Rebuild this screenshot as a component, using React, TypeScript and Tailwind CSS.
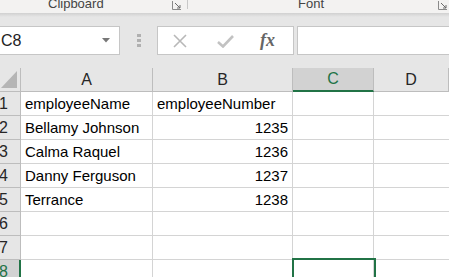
import React from "react";

const rows = [
  ["employeeName", "employeeNumber"],
  ["Bellamy Johnson", "1235"],
  ["Calma Raquel", "1236"],
  ["Danny Ferguson", "1237"],
  ["Terrance", "1238"],
  ["", ""],
  ["", ""],
  ["", ""],
];

function Launcher() {
  return (
    <svg width="10" height="9" viewBox="0 0 10 9" className="shrink-0">
      <path d="M0.5 0 V8.5 H9" stroke="#8a8a8a" fill="none" />
      <path d="M3 2 L8 7 M8 4 V7 H5" stroke="#6a6a6a" fill="none" />
    </svg>
  );
}

function Ribbon() {
  return (
    <div className="h-[13px] bg-[#f3f2f1] flex overflow-hidden text-[13px] leading-[13px] text-[#444] font-['Liberation_Sans',sans-serif]">
      <div className="w-[188px] flex items-start shrink-0 border-r border-[#c8c8c8] h-[9px]">
        <span className="ml-[48px] mt-[-3px]">Clipboard</span>
        <div className="ml-auto mr-[5px] mt-[1px]">
          <Launcher />
        </div>
      </div>
      <div className="flex-1 flex items-start">
        <span className="ml-[110px] mt-[-3px]">Font</span>
        <div className="ml-auto mr-[1px] mt-[1px]">
          <Launcher />
        </div>
      </div>
    </div>
  );
}

function FormulaBar() {
  return (
    <div className="pt-[9px] flex h-[38px]">
      <div className="w-[120px] h-[29px] bg-white border border-l-0 border-[#c6c6c6] flex items-center">
        <span className="text-[16px] text-[#222] font-['Liberation_Sans',sans-serif] ml-[1px]">C8</span>
        <svg width="8" height="5" viewBox="0 0 8 5" className="ml-auto mr-[9px]">
          <path d="M0 0 H8 L4 4.5 Z" fill="#777" />
        </svg>
      </div>
      <div className="w-[37px] flex flex-col items-center justify-center gap-[2px]">
        <div className="w-[4px] h-[3px] bg-[#b0b0b0]" />
        <div className="w-[4px] h-[3px] bg-[#b0b0b0]" />
        <div className="w-[4px] h-[3px] bg-[#b0b0b0]" />
      </div>
      <div className="w-[137px] h-[29px] bg-white border border-[#c6c6c6] flex items-center">
        <svg width="16" height="16" viewBox="0 0 16 16" className="ml-[14px]">
          <path d="M2 2 L14 14 M14 2 L2 14" stroke="#b8b8b8" strokeWidth="1.6" />
        </svg>
        <svg width="17" height="14" viewBox="0 0 17 14" className="ml-[29px]">
          <path d="M1 8 L6 12.5 L16 2" stroke="#c2c2c2" strokeWidth="2.6" fill="none" />
        </svg>
        <span className="ml-[26px] text-[18px] italic font-bold text-[#666] font-['Liberation_Serif',serif]">fx</span>
      </div>
      <div className="ml-[3px] flex-1 h-[29px] bg-white border border-r-0 border-[#c6c6c6]" />
    </div>
  );
}

function Sheet() {
  const cols = ["A", "B", "C", "D"];
  const colW = ["w-[132px]", "w-[140px]", "w-[81px]", "flex-1"];
  return (
    <div className="mt-[13px] font-['Liberation_Sans',sans-serif]">
      <div className="flex h-[24px]">
        <div className="w-[21px] h-[24px] border-r border-b border-[#bdbdbd] flex items-end">
          <svg width="17" height="18" viewBox="0 0 17 18" className="ml-[1px] mb-[2px]">
            <path d="M16 0 V17 H0 Z" fill="#b5b5b5" />
          </svg>
        </div>
        {cols.map((c, i) =>
          c === "C" ? (
            <div
              key={c}
              className={`${colW[i]} h-[24px] bg-[#d2d2d2] border-r border-[#bdbdbd] border-b-2 border-b-[#217346] flex items-center justify-center text-[16px] text-[#217346]`}
            >
              {c}
            </div>
          ) : (
            <div
              key={c}
              className={`${colW[i]} h-[24px] border-r border-b border-[#bdbdbd] flex items-center justify-center text-[16px] text-[#262626]`}
            >
              {c}
            </div>
          )
        )}
      </div>
      {rows.map((r, i) => {
        const sel = i === 7;
        return (
          <div key={i} className="flex h-[24px] bg-white">
            <div
              className={
                sel
                  ? "w-[21px] h-[24px] bg-[#d2d2d2] border-r-2 border-r-[#217346] border-b border-b-[#bdbdbd] flex items-center text-[16px] text-[#217346]"
                  : "w-[21px] h-[24px] bg-[#e6e6e6] border-r border-b border-[#bdbdbd] flex items-center text-[16px] text-[#262626]"
              }
            >
              <span className="ml-[-1px]">{i + 1}</span>
            </div>
            <div className="w-[132px] h-[24px] border-r border-b border-[#d4d4d4] flex items-end pb-[2px] pl-[4px] text-[15px] leading-[18px] text-black whitespace-nowrap">
              {r[0]}
            </div>
            <div
              className={`w-[140px] h-[24px] border-r border-b border-[#d4d4d4] flex items-end pb-[2px] text-[15px] leading-[18px] text-black whitespace-nowrap ${
                i === 0 ? "pl-[4px]" : "justify-end pr-[4px]"
              }`}
            >
              {r[1]}
            </div>
            <div className="w-[81px] h-[24px] border-r border-b border-[#d4d4d4] relative">
              {sel && (
                <div className="absolute top-[-2px] left-[-1px] w-[84px] h-[30px] border-2 border-[#217346]" />
              )}
            </div>
            <div className="flex-1 h-[24px] border-b border-[#d4d4d4]" />
          </div>
        );
      })}
    </div>
  );
}

export default function App() {
  return (
    <div className="w-[449px] h-[277px] overflow-hidden bg-[#e6e6e6]">
      <Ribbon />
      <div className="h-[4px] bg-gradient-to-b from-[#d0d0d0] to-[#e6e6e6]" />
      <FormulaBar />
      <Sheet />
    </div>
  );
}
